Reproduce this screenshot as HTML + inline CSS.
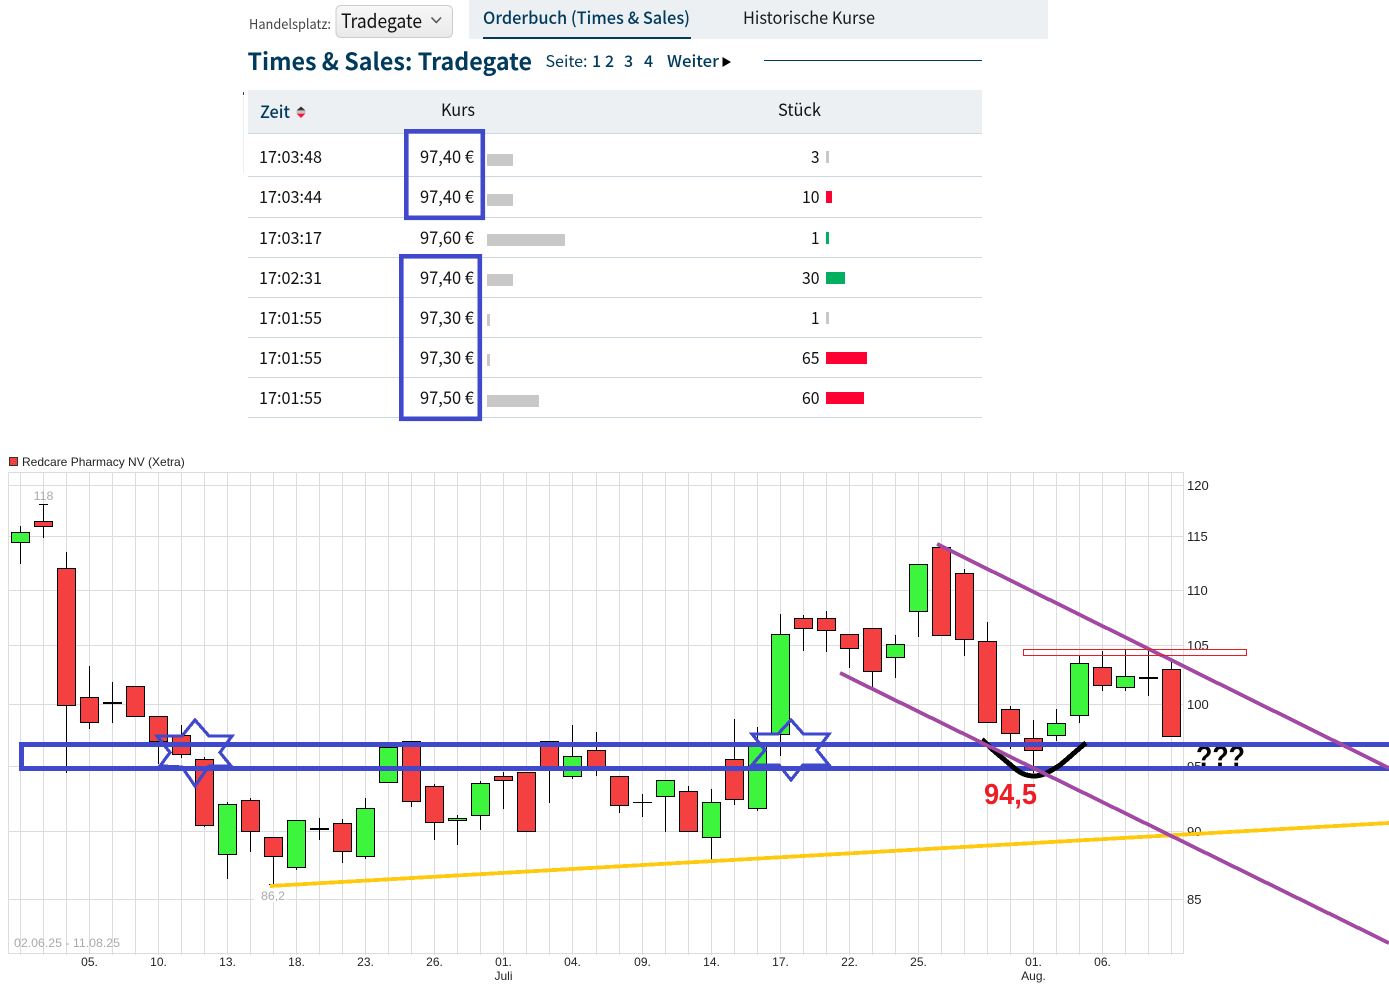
<!DOCTYPE html>
<html lang="de"><head><meta charset="utf-8"><title>Times &amp; Sales</title>
<style>
html,body{margin:0;padding:0;background:#fff;width:1389px;height:1007px;overflow:hidden}
svg{display:block}
.n{font-family:"Noto Sans CJK JP","Liberation Sans",sans-serif}
.r text{font-size:17px;fill:#111}
.l{font-family:"Liberation Sans",sans-serif;font-size:12px;fill:#222}
.g{font-family:"Liberation Sans",sans-serif;font-size:12.400px;fill:#aaa}
.c{stroke:#000;stroke-width:1}
.R{fill:#f44040}.G{fill:#3ef53e}
</style></head><body>
<svg width="1389" height="1007" viewBox="0 0 1389 1007" xmlns="http://www.w3.org/2000/svg">
<defs><linearGradient id="s" x1="0" y1="0" x2="0" y2="1"><stop offset="0" stop-color="#f8f8f8"/><stop offset="1" stop-color="#e9e9e9"/></linearGradient></defs>
<rect width="1389" height="1007" fill="#fff"/>

<!-- top -->
<g class="n">
<rect x="469" y="0" width="579" height="39" fill="#ecf0f3"/>
<rect x="483" y="37" width="208" height="2" fill="#003a5d"/>
<text x="483" y="24" font-size="17" font-weight="500" fill="#003a5d" textLength="207" lengthAdjust="spacingAndGlyphs">Orderbuch (Times &amp; Sales)</text>
<text x="743" y="24" font-size="17" fill="#1a1a1a" textLength="132" lengthAdjust="spacingAndGlyphs">Historische Kurse</text>
<text x="249" y="29" font-size="13.500" fill="#444" textLength="82" lengthAdjust="spacingAndGlyphs">Handelsplatz:</text>
<rect x="336" y="5.500" width="116.500" height="32" rx="5" fill="url(#s)" stroke="#ccc"/>
<text x="341" y="28" font-size="19.500" fill="#111" textLength="81" lengthAdjust="spacingAndGlyphs">Tradegate</text>
<path d="M431.500 17.500L436.300 22.500L441 17.500" fill="none" stroke="#555" stroke-width="1.600"/>
<text x="247.500" y="70" font-size="23.500" font-weight="700" fill="#003a5d" textLength="284.500" lengthAdjust="spacingAndGlyphs">Times &amp; Sales: Tradegate</text>
<text x="545.500" y="67" font-size="16" fill="#003a5d" textLength="42" lengthAdjust="spacingAndGlyphs">Seite:</text>
<text x="592" y="67" font-size="16" font-weight="500" fill="#003a5d">1</text>
<text x="605" y="67" font-size="16" font-weight="500" fill="#003a5d">2</text>
<text x="624" y="67" font-size="16" font-weight="500" fill="#003a5d">3</text>
<text x="644" y="67" font-size="16" font-weight="500" fill="#003a5d">4</text>
<text x="667" y="67" font-size="16" font-weight="500" fill="#003a5d" textLength="52" lengthAdjust="spacingAndGlyphs">Weiter</text>
<path d="M722.500 57V67L731 62Z" fill="#000"/>
<rect x="764" y="60" width="218" height="1" fill="#003a5d"/>
<rect x="243" y="92" width="1" height="3" fill="#445"/>
<rect x="243" y="95" width="1" height="78" fill="#eee"/>

<rect x="248" y="90" width="734" height="43" fill="#ecf0f3"/>
<rect x="248" y="133" width="734" height="1" fill="#cdd7df"/>
<text x="260" y="118" font-size="17" font-weight="500" fill="#003a5d" textLength="30" lengthAdjust="spacingAndGlyphs">Zeit</text>
<path d="M296.500 110.500L301 106.500L305.500 110.500Z" fill="#333"/><path d="M296.500 113.500H305.500L301 118Z" fill="#f0183c"/><rect x="296.500" y="111.500" width="9" height="1" fill="#999"/>
<text x="441" y="116" font-size="17" fill="#111" textLength="34" lengthAdjust="spacingAndGlyphs">Kurs</text>
<text x="778" y="116" font-size="17" fill="#111" textLength="43" lengthAdjust="spacingAndGlyphs">Stück</text>

<path d="M248 176.500H982M248 217.500H982M248 257.500H982M248 297.500H982M248 337.500H982M248 377.500H982M248 417.500H982" stroke="#cdd7df" stroke-width="1" fill="none"/>

<g class="r">
<text x="259" y="163" textLength="63" lengthAdjust="spacingAndGlyphs">17:03:48</text><text x="420" y="163" textLength="54" lengthAdjust="spacingAndGlyphs">97,40 €</text><text x="811" y="163" textLength="8.500" lengthAdjust="spacingAndGlyphs">3</text>
<text x="259" y="203" textLength="63" lengthAdjust="spacingAndGlyphs">17:03:44</text><text x="420" y="203" textLength="54" lengthAdjust="spacingAndGlyphs">97,40 €</text><text x="802" y="203" textLength="17.500" lengthAdjust="spacingAndGlyphs">10</text>
<text x="259" y="244" textLength="63" lengthAdjust="spacingAndGlyphs">17:03:17</text><text x="420" y="244" textLength="54" lengthAdjust="spacingAndGlyphs">97,60 €</text><text x="811" y="244" textLength="8.500" lengthAdjust="spacingAndGlyphs">1</text>
<text x="259" y="284" textLength="63" lengthAdjust="spacingAndGlyphs">17:02:31</text><text x="420" y="284" textLength="54" lengthAdjust="spacingAndGlyphs">97,40 €</text><text x="802" y="284" textLength="17.500" lengthAdjust="spacingAndGlyphs">30</text>
<text x="259" y="324" textLength="63" lengthAdjust="spacingAndGlyphs">17:01:55</text><text x="420" y="324" textLength="54" lengthAdjust="spacingAndGlyphs">97,30 €</text><text x="811" y="324" textLength="8.500" lengthAdjust="spacingAndGlyphs">1</text>
<text x="259" y="364" textLength="63" lengthAdjust="spacingAndGlyphs">17:01:55</text><text x="420" y="364" textLength="54" lengthAdjust="spacingAndGlyphs">97,30 €</text><text x="802" y="364" textLength="17.500" lengthAdjust="spacingAndGlyphs">65</text>
<text x="259" y="404" textLength="63" lengthAdjust="spacingAndGlyphs">17:01:55</text><text x="420" y="404" textLength="54" lengthAdjust="spacingAndGlyphs">97,50 €</text><text x="802" y="404" textLength="17.500" lengthAdjust="spacingAndGlyphs">60</text>
</g>
</g>
<!-- volume bars -->
<g fill="#c8c8c8">
<rect x="487" y="154" width="26" height="12"/><rect x="487" y="194" width="26" height="12"/><rect x="487" y="234" width="78" height="12"/><rect x="487" y="274" width="26" height="12"/><rect x="487" y="314" width="3" height="12"/><rect x="487" y="354" width="3" height="12"/><rect x="487" y="395" width="52" height="12"/>
<rect x="826" y="151" width="3" height="12"/><rect x="826" y="312" width="3" height="12"/>
</g>
<g fill="#ff0033"><rect x="826" y="191" width="6" height="12"/><rect x="826" y="352" width="41" height="12"/><rect x="826" y="392" width="38" height="12"/></g>
<g fill="#00b060"><rect x="826" y="232" width="3" height="12"/><rect x="826" y="272" width="19" height="12"/></g>
<!-- blue boxes top -->
<rect x="406.300" y="131.300" width="76.500" height="86.500" fill="none" stroke="#4048cc" stroke-width="4.600"/>
<rect x="401.300" y="256.300" width="78.500" height="162.500" fill="none" stroke="#4048cc" stroke-width="4.600"/>

<!-- chart -->
<rect x="9.500" y="457.500" width="8" height="8" fill="#f44040" stroke="#333"/>
<text x="22" y="466" class="l">Redcare Pharmacy NV (Xetra)</text>

<path shape-rendering="crispEdges" fill="none" stroke="#dcdcdc" stroke-width="1" d="M8 472.500H1184M8 485.500H1184M8 536.500H1184M8 590.500H1184M8 645.500H1184M8 704.500H1184M8 766.500H1184M8 831.500H1184M8 899.500H1184M8 953.500H1184M8.500 472V954M1183.500 472V954M20.500 472V955M43.500 472V955M66.500 472V955M89.500 472V955M112.500 472V955M135.500 472V955M158.500 472V955M181.500 472V955M204.500 472V955M227.500 472V955M250.500 472V955M273.500 472V955M296.500 472V955M319.500 472V955M342.500 472V955M365.500 472V955M388.500 472V955M411.500 472V955M434.500 472V955M457.500 472V955M480.500 472V955M503.500 472V955M526.500 472V955M549.500 472V955M572.500 472V955M596.500 472V955M619.500 472V955M642.500 472V955M665.500 472V955M688.500 472V955M711.500 472V955M734.500 472V955M757.500 472V955M780.500 472V955M803.500 472V955M826.500 472V955M849.500 472V955M872.500 472V955M895.500 472V955M918.500 472V955M941.500 472V955M964.500 472V955M987.500 472V955M1010.500 472V955M1033.500 472V955M1056.500 472V955M1079.500 472V955M1102.500 472V955M1125.500 472V955M1148.500 472V955M1171.500 472V955"/>

<!-- wicks -->
<path shape-rendering="crispEdges" fill="none" stroke="#000" stroke-width="1" d="M20.500 526V564M43.500 504V538M39 504.500H48M66.500 552V773M89.500 666V729M112.500 682V723M158.500 716V764M181.500 725V758M204.500 757V827M227.500 802V879M250.500 798V852M273.500 837V885M269 884.500H278M296.500 820V870M319.500 818V840M342.500 819V863M365.500 798V859M411.500 741V807M434.500 784V840M457.500 815V845M480.500 781V830M503.500 772V809M549.500 741V803M572.500 725V779M596.500 732V776M619.500 776V813M642.500 794V817M633 802.500H652M665.500 780V832M688.500 786V831M711.500 789V860M734.500 719V805M757.500 727V811M780.500 614V756M803.500 615V651M826.500 611V652M849.500 634V668M872.500 628V688M895.500 635V678M918.500 564V637M964.500 569V656M987.500 622V722M1010.500 706V749M1033.500 720V773M1056.500 709V741M1079.500 656V723M1102.500 651V691M1125.500 650V691M1148.500 648V696M1171.500 662V669"/>
<g fill="#000" shape-rendering="crispEdges"><rect x="103" y="702" width="19" height="2"/><rect x="310" y="828" width="19" height="2"/><rect x="1139" y="677" width="19" height="2"/></g>

<!-- bodies -->
<g class="c" shape-rendering="crispEdges">
<g class="G">
<rect x="11.500" y="532.500" width="18" height="10"/>
<rect x="218.500" y="804.500" width="18" height="50"/>
<rect x="287.500" y="820.500" width="18" height="47"/>
<rect x="356.500" y="808.500" width="18" height="48"/>
<rect x="379.500" y="747.500" width="18" height="35"/>
<rect x="448.500" y="818.500" width="18" height="2"/>
<rect x="471.500" y="783.500" width="18" height="32"/>
<rect x="563.500" y="756.500" width="18" height="20"/>
<rect x="656.500" y="780.500" width="18" height="16"/>
<rect x="702.500" y="802.500" width="18" height="35"/>
<rect x="748.500" y="745.500" width="18" height="63"/>
<rect x="771.500" y="634.500" width="18" height="100"/>
<rect x="886.500" y="644.500" width="18" height="13"/>
<rect x="909.500" y="564.500" width="18" height="47"/>
<rect x="1047.500" y="723.500" width="18" height="12"/>
<rect x="1070.500" y="663.500" width="18" height="52"/>
<rect x="1116.500" y="676.500" width="18" height="11"/>
</g>
<g class="R">
<rect x="34.500" y="521.500" width="18" height="5"/>
<rect x="57.500" y="568.500" width="18" height="137"/>
<rect x="80.500" y="697.500" width="18" height="25"/>
<rect x="126.500" y="686.500" width="18" height="30"/>
<rect x="149.500" y="716.500" width="18" height="25"/>
<rect x="172.500" y="735.500" width="18" height="19"/>
<rect x="195.500" y="759.500" width="18" height="66"/>
<rect x="241.500" y="800.500" width="18" height="31"/>
<rect x="264.500" y="837.500" width="18" height="19"/>
<rect x="333.500" y="823.500" width="18" height="28"/>
<rect x="402.500" y="741.500" width="18" height="60"/>
<rect x="425.500" y="786.500" width="18" height="36"/>
<rect x="494.500" y="776.500" width="18" height="4"/>
<rect x="517.500" y="772.500" width="18" height="59"/>
<rect x="540.500" y="741.500" width="18" height="27"/>
<rect x="587.500" y="750.500" width="18" height="19"/>
<rect x="610.500" y="776.500" width="18" height="29"/>
<rect x="679.500" y="791.500" width="18" height="40"/>
<rect x="725.500" y="759.500" width="18" height="40"/>
<rect x="794.500" y="618.500" width="18" height="10"/>
<rect x="817.500" y="618.500" width="18" height="12"/>
<rect x="840.500" y="634.500" width="18" height="14"/>
<rect x="863.500" y="628.500" width="18" height="43"/>
<rect x="932.500" y="547.500" width="18" height="88"/>
<rect x="955.500" y="573.500" width="18" height="66"/>
<rect x="978.500" y="641.500" width="18" height="81"/>
<rect x="1001.500" y="709.500" width="18" height="24"/>
<rect x="1024.500" y="738.500" width="18" height="12"/>
<rect x="1093.500" y="667.500" width="18" height="18"/>
<rect x="1162.500" y="669.500" width="18" height="67"/>
</g>
</g>

<!-- chart labels -->
<text x="43.500" y="500" class="g" text-anchor="middle">118</text>
<rect x="254" y="889" width="32" height="13" fill="#fff"/>
<text x="273" y="900" class="g" text-anchor="middle">86,2</text>
<text x="14" y="947" class="g" textLength="106" lengthAdjust="spacingAndGlyphs">02.06.25 - 11.08.25</text>
<g class="l" text-anchor="middle">
<text x="89.500" y="966">05.</text><text x="158.500" y="966">10.</text><text x="227.500" y="966">13.</text><text x="296.500" y="966">18.</text><text x="365.500" y="966">23.</text><text x="434.500" y="966">26.</text><text x="503.500" y="966">01.</text><text x="503.500" y="980">Juli</text><text x="572.500" y="966">04.</text><text x="642.500" y="966">09.</text><text x="711.500" y="966">14.</text><text x="780.500" y="966">17.</text><text x="849.500" y="966">22.</text><text x="918.500" y="966">25.</text><text x="1033.500" y="966">01.</text><text x="1033.500" y="980">Aug.</text><text x="1102.500" y="966">06.</text>
</g>
<g class="l" style="font-size:13px">
<text x="1187" y="490">120</text><text x="1187" y="541">115</text><text x="1187" y="595">110</text><text x="1187" y="650">105</text><text x="1187" y="709">100</text><text x="1187" y="771">95</text><text x="1187" y="836">90</text><text x="1187" y="904">85</text>
</g>

<!-- annotations -->
<text x="1196" y="766.500" font-family="Liberation Sans" font-weight="700" font-size="30" fill="#000" textLength="49" lengthAdjust="spacingAndGlyphs">???</text>
<path shape-rendering="crispEdges" d="M21.500 744.500H1389M21.500 768.500H1389M21.500 742V771" fill="none" stroke="#4048cc" stroke-width="5"/>
<g fill="none" stroke="#4048cc" stroke-width="3.200" stroke-linejoin="miter" shape-rendering="crispEdges">
<path d="M195 720L209 736L232 736L220 752.500L231 766L209 766L195 786L182 767L160 766L170 752.500L157 736L182 736Z"/>
<path d="M791 720L803.500 734L829 734L817 750L829 765L803 765L791 780L779 765L752 765L765 750L752 734L778 734Z"/>
</g>
<text x="984" y="804" font-family="Liberation Sans" font-weight="700" font-size="29" fill="#ee1c25" textLength="53" lengthAdjust="spacingAndGlyphs">94,5</text>
<path shape-rendering="crispEdges" d="M982 739.500L993 750L1013 767C1020 773 1026 776 1034 776C1042 776 1048 773 1060 765C1070 757 1078 749 1086 743" fill="none" stroke="#000" stroke-width="5"/>
<path shape-rendering="crispEdges" d="M270 886L1389 823" fill="none" stroke="#ffc90e" stroke-width="3.800"/>
<path shape-rendering="crispEdges" d="M937 544L1389 768M840 673L1389 943" fill="none" stroke="#a349a4" stroke-width="3.800"/>
<rect x="1023.500" y="649.500" width="223" height="6" fill="none" stroke="#ed1c24" stroke-width="1" shape-rendering="crispEdges"/>
</svg>
</body></html>
